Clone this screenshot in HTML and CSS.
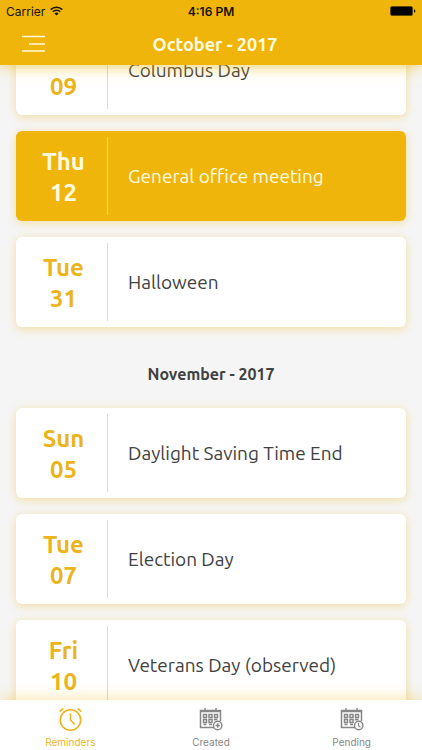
FILE: index.html
```html
<!DOCTYPE html>
<html lang="en">
<head>
<meta charset="utf-8">
<meta name="viewport" content="width=device-width, initial-scale=1">
<title>Reminders</title>
<link rel="stylesheet" href="styles.css">
</head>
<body>
<header class="header">
  <div class="status">
    <span class="carrier">Carrier
      <svg width="13" height="10" viewBox="0 0 13 10" aria-hidden="true"><g fill="none" stroke="#17130a" stroke-width="1.6"><path d="M.7 3.6a8.3 8.3 0 0 1 11.6 0"/><path d="M2.8 5.8a5.3 5.3 0 0 1 7.4 0"/></g><path d="M6.5 9.6 4.4 7.5a3 3 0 0 1 4.2 0z" fill="#17130a"/></svg>
    </span>
    <span class="time">4:16 PM</span>
    <svg class="battery" width="26" height="10" viewBox="0 0 26 10" aria-hidden="true"><rect x=".5" y=".5" width="22" height="9" rx="1.5" fill="#000" stroke="#4a3a08" stroke-width=".6"/><path d="M24 3.3q1.4.4 1.4 1.7T24 6.7z" fill="#000"/></svg>
  </div>
  <div class="bar">
    <button class="menu" type="button" aria-label="Menu">
      <svg width="24" height="18" viewBox="0 0 24 18"><path d="M1 1.500h23M8 9h16M1 16h23" stroke="#fffbd9" stroke-width="1.7"/></svg>
    </button>
    <h1 class="title">October - 2017</h1>
  </div>
</header>

<main class="content">
  <ul class="list list-scrolled">
    <li class="card"><div class="date"><span>Mon</span><span>09</span></div><p class="event">Columbus Day</p></li>
    <li class="card card-active"><div class="date"><span>Thu</span><span>12</span></div><p class="event">General office meeting</p></li>
    <li class="card"><div class="date"><span>Tue</span><span>31</span></div><p class="event">Halloween</p></li>
  </ul>
  <h2 class="month">November - 2017</h2>
  <ul class="list">
    <li class="card"><div class="date"><span>Sun</span><span>05</span></div><p class="event">Daylight Saving Time End</p></li>
    <li class="card"><div class="date"><span>Tue</span><span>07</span></div><p class="event">Election Day</p></li>
    <li class="card"><div class="date"><span>Fri</span><span>10</span></div><p class="event">Veterans Day (observed)</p></li>
  </ul>
</main>

<nav class="tabs">
  <a class="tab tab-current" href="#reminders">
    <svg width="24" height="24" viewBox="0 0 24 24" fill="none" stroke="currentColor" stroke-width="1.6" stroke-linecap="round"><circle cx="12.500" cy="13" r="10.2"/><path d="M12.500 7v6l3.600 3.800M2.200 4.200l2.600-2.400M22.800 4.200l-2.600-2.400"/></svg>
    <span>Reminders</span>
  </a>
  <a class="tab" href="#created">
    <svg width="24" height="24" viewBox="0 0 24 24" fill="none" stroke="currentColor"><path d="M6 1v4M17 1v4" stroke-width="1.4"/><path d="M15 20.5H1.5v-17h20V14M1 4.5h21" stroke-width="1.5"/><path d="M4.5 7.5h3v3h-3zM10 7.5h3v3h-3zM15.5 7.5h3v3h-3zM4.5 12.5h3v3h-3zM10 12.5h3v3h-3zM15.5 13.5v-1h3M4.500 17.500h3M10 17.500h3" stroke-width="1.5"/><circle cx="18.7" cy="18.5" r="4.2" fill="#fff" stroke-width="1.4"/><path d="M18.700 16.300v4.400M16.500 18.500h4.400" stroke-width="1.5"/></svg>
    <span>Created</span>
  </a>
  <a class="tab" href="#pending">
    <svg width="24" height="24" viewBox="0 0 24 24" fill="none" stroke="currentColor"><path d="M6 1v4M17 1v4" stroke-width="1.4"/><path d="M15 20.5H1.5v-17h20V14M1 4.5h21" stroke-width="1.5"/><path d="M4.5 7.5h3v3h-3zM10 7.5h3v3h-3zM15.5 7.5h3v3h-3zM4.5 12.5h3v3h-3zM10 12.5h3v3h-3zM15.5 13.5v-1h3M4.5 17.5h3M10 17.5h3" stroke-width="1.5"/><circle cx="18.7" cy="18.5" r="4.2" fill="#fff" stroke-width="1.4"/><path d="M18.5 15.8v3l2 1.6" stroke-width="1.2"/></svg>
    <span>Pending</span>
  </a>
</nav>
</body>
</html>
```
FILE: styles.css
```css
* {
  box-sizing: border-box;
}

body {
  margin: 0;
  height: 100vh;
  display: flex;
  flex-direction: column;
  background: #f5f5f5;
  color: #414141;
  font-family: Ubuntu, "Noto Sans", sans-serif;
}

h1, h2, p, ul {
  margin: 0;
  padding: 0;
}

.header {
  position: relative;
  z-index: 1;
  background: #efb50b;
  box-shadow: 0 2px 14px rgba(239, 181, 11, 0.6);
}

.status {
  display: grid;
  grid-template-columns: 1fr auto 1fr;
  align-items: center;
  height: 22px;
  padding: 0 6px;
  color: #17130a;
  font: 12px Inter, sans-serif;
}

.carrier {
  display: flex;
  align-items: center;
  gap: 5px;
}

.time {
  font-weight: 600;
}

.battery {
  justify-self: end;
}

.bar {
  display: grid;
  grid-template-columns: 64px 1fr 56px;
  align-items: center;
  height: 43px;
}

.menu {
  display: flex;
  padding: 0 0 0 21px;
  border: 0;
  background: none;
}

.title {
  color: #fffbe0;
  font-size: 18px;
  font-weight: 600;
  line-height: 24px;
  text-align: center;
}

.content {
  flex: 1;
  min-height: 0;
  overflow-y: auto;
  scrollbar-width: none;
}

.list {
  display: flex;
  flex-direction: column;
  gap: 16px;
  padding: 0 16px;
  list-style: none;
}

.list-scrolled {
  margin-top: -40px;
}

.card {
  display: flex;
  align-items: center;
  height: 90px;
  padding: 6px 0;
  border-radius: 6px;
  background: #fff;
  box-shadow: 0 2px 10px rgba(239, 181, 11, 0.36);
}

.date {
  display: flex;
  flex-direction: column;
  justify-content: center;
  height: 100%;
  width: 92px;
  padding: 2px 0 0 4px;
  border-right: 1px solid #d9d9d9;
  color: #ecb41c;
  font-size: 24px;
  font-weight: 600;
  line-height: 31px;
  text-align: center;
}

.event {
  padding-left: 20px;
  font-size: 19px;
  line-height: 24px;
}

.card-active {
  background: #efb50b;
}

.card-active .date,
.card-active .event {
  color: #fffbe0;
}

.card-active .date {
  border-color: #f7dc88;
}

.month {
  padding: 35px 0 22px;
  font-size: 16px;
  font-weight: 600;
  line-height: 24px;
  text-align: center;
}

.tabs {
  position: relative;
  z-index: 1;
  display: grid;
  grid-template-columns: repeat(3, 1fr);
  height: 50px;
  background: #fff;
  box-shadow: 0 -2px 14px rgba(239, 181, 11, 0.35);
}

.tab {
  display: flex;
  flex-direction: column;
  align-items: center;
  gap: 3px;
  padding-top: 7px;
  color: #868686;
  font: 10px/16px Inter, sans-serif;
  text-decoration: none;
}

.tab-current {
  color: #ecb41c;
}
```
